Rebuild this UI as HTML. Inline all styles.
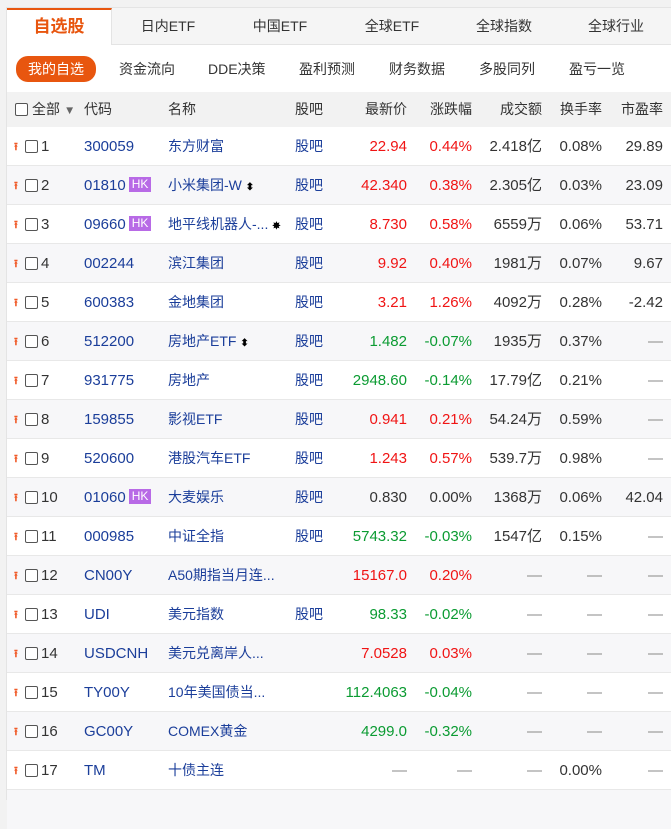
<!DOCTYPE html><html><head><meta charset="utf-8"><style>
body{margin:0;width:671px;height:799px;overflow:hidden;background:#f2f2f2;font-family:"Liberation Sans","Noto Sans CJK SC",sans-serif;font-size:14px;color:#333}
#w{position:absolute;left:6px;top:7px;width:665px;height:792px;background:#fff;border-left:1px solid #e4e4e4;border-top:1px solid #e4e4e4}
.tabs{height:36px;background:#f5f5f5;border-bottom:1px solid #e4e4e4;position:relative}
.tab{position:absolute;top:0;height:36px;line-height:36px;text-align:center;font-size:14px;color:#333}
.tab.a{background:#fff;color:#e8560f;font-size:17px;font-weight:bold;border-top:2px solid #e8560f;height:35px;line-height:33px;border-right:1px solid #e4e4e4}
.sub{height:48px;position:relative}
.sub span{position:absolute;top:13px;height:22px;line-height:22px;font-size:14px}
.sub .on{background:#e8560f;color:#fff;border-radius:12px;padding:0 12px;left:9px;top:11px;height:26px;line-height:26px}
.r{position:absolute;left:0;width:665px;height:39px;line-height:38px;border-bottom:1px solid #e8e8e8;box-sizing:border-box;font-size:15px}
.r span{position:absolute;white-space:nowrap}
.r > span:not(.cb){top:1px;height:38px;line-height:38px}
.r > span.m,.r > span.y{top:0}
.h > span:not(.cb){height:35px;line-height:35px;top:0}
.g{background:#f7f7f9}
.h{background:#f2f2f2;height:35px;line-height:35px;color:#333;border:none;font-size:14px}
.cb{display:inline-block;width:11px;height:11px;border:1px solid #555;border-radius:2px;position:absolute;top:13px;left:18px;background:#fff}
.h .cb{top:11px;left:8px}
.pin{left:7px;color:#f05a28;font-size:11px;font-weight:bold}
.b{color:#1b3e9a}
.red{color:#f01414}.grn{color:#0b9b32}
.hk{display:inline-block;background:#b86ae6;color:#fff;font-size:12px;line-height:15px;padding:0 3px;margin-left:3px;vertical-align:2px}
.n1{left:34px}.c{left:77px}.m{left:161px;font-size:14px}.y{left:288px;font-size:14px}
.p{right:265px;text-align:right}.z{right:200px}.v{right:130px}.t{right:70px}.e{right:9px}
</style></head><body><div id="w">
<div class="tabs">
<div class="tab a" style="left:0;width:104px">自选股</div>
<div class="tab" style="left:105px;width:112px">日内ETF</div>
<div class="tab" style="left:217px;width:112px">中国ETF</div>
<div class="tab" style="left:329px;width:112px">全球ETF</div>
<div class="tab" style="left:441px;width:112px">全球指数</div>
<div class="tab" style="left:553px;width:112px">全球行业</div>
</div>
<div class="sub"><span class="on">我的自选</span><span style="left:112px">资金流向</span><span style="left:201px">DDE决策</span><span style="left:292px">盈利预测</span><span style="left:382px">财务数据</span><span style="left:472px">多股同列</span><span style="left:562px">盈亏一览</span></div>
<div class="r h" style="top:84px"><span class="cb"></span><span style="left:25px">全部 <small style="color:#666">▼</small></span><span class="c">代码</span><span class="m">名称</span><span class="y">股吧</span><span class="p">最新价</span><span class="z">涨跌幅</span><span class="v">成交额</span><span class="t">换手率</span><span class="e">市盈率</span></div>
<div id="rows"></div>
</div>
<script>
var d=[["300059","","东方财富",1,"22.94","0.44%","2.418亿","0.08%","29.89","red"],
["01810",1,"小米集团-W ⬍",1,"42.340","0.38%","2.305亿","0.03%","23.09","red"],
["09660",1,"地平线机器人-... ✸",1,"8.730","0.58%","6559万","0.06%","53.71","red"],
["002244","","滨江集团",1,"9.92","0.40%","1981万","0.07%","9.67","red"],
["600383","","金地集团",1,"3.21","1.26%","4092万","0.28%","-2.42","red"],
["512200","","房地产ETF ⬍",1,"1.482","-0.07%","1935万","0.37%","—","grn"],
["931775","","房地产",1,"2948.60","-0.14%","17.79亿","0.21%","—","grn"],
["159855","","影视ETF",1,"0.941","0.21%","54.24万","0.59%","—","red"],
["520600","","港股汽车ETF",1,"1.243","0.57%","539.7万","0.98%","—","red"],
["01060",1,"大麦娱乐",1,"0.830","0.00%","1368万","0.06%","42.04",""],
["000985","","中证全指",1,"5743.32","-0.03%","1547亿","0.15%","—","grn"],
["CN00Y","","A50期指当月连...",0,"15167.0","0.20%","—","—","—","red"],
["UDI","","美元指数",1,"98.33","-0.02%","—","—","—","grn"],
["USDCNH","","美元兑离岸人...",0,"7.0528","0.03%","—","—","—","red"],
["TY00Y","","10年美国债当...",0,"112.4063","-0.04%","—","—","—","grn"],
["GC00Y","","COMEX黄金",0,"4299.0","-0.32%","—","—","—","grn"],
["TM","","十债主连",0,"—","—","—","0.00%","—",""]];
var h="";d.forEach(function(r,i){var top=119+i*39;var col=r[9];
h+='<div class="r'+(i%2?' g':'')+'" style="top:'+top+'px"><span class="pin">⭱</span><span class="cb"></span><span class="n1">'+(i+1)+'</span><span class="c b">'+r[0]+(r[1]?'<span class="hk" style="position:static">HK</span>':'')+'</span><span class="m b">'+r[2].replace(/(⬍|✸)/,'<b style="color:#000;font-size:10px">$1</b>')+'</span>'+(r[3]?'<span class="y b">股吧</span>':'')+'<span class="p '+(r[4]=="—"?'':col)+'" style="'+(r[4]=="—"?'color:#888':'')+'">'+r[4]+'</span><span class="z '+(r[5]=="—"?'':col)+'" style="'+(r[5]=="—"?'color:#888':'')+'">'+r[5]+'</span><span class="v" style="'+(r[6]=="—"?'color:#888':'')+'">'+r[6]+'</span><span class="t" style="'+(r[7]=="—"?'color:#888':'')+'">'+r[7]+'</span><span class="e" style="'+(r[8]=="—"?'color:#888':'')+'">'+r[8]+'</span></div>';});
h+='<div class="r" style="top:782px;background:#f7f7f9;border:none"></div>';
document.getElementById("rows").innerHTML=h;
</script>
</body></html>
